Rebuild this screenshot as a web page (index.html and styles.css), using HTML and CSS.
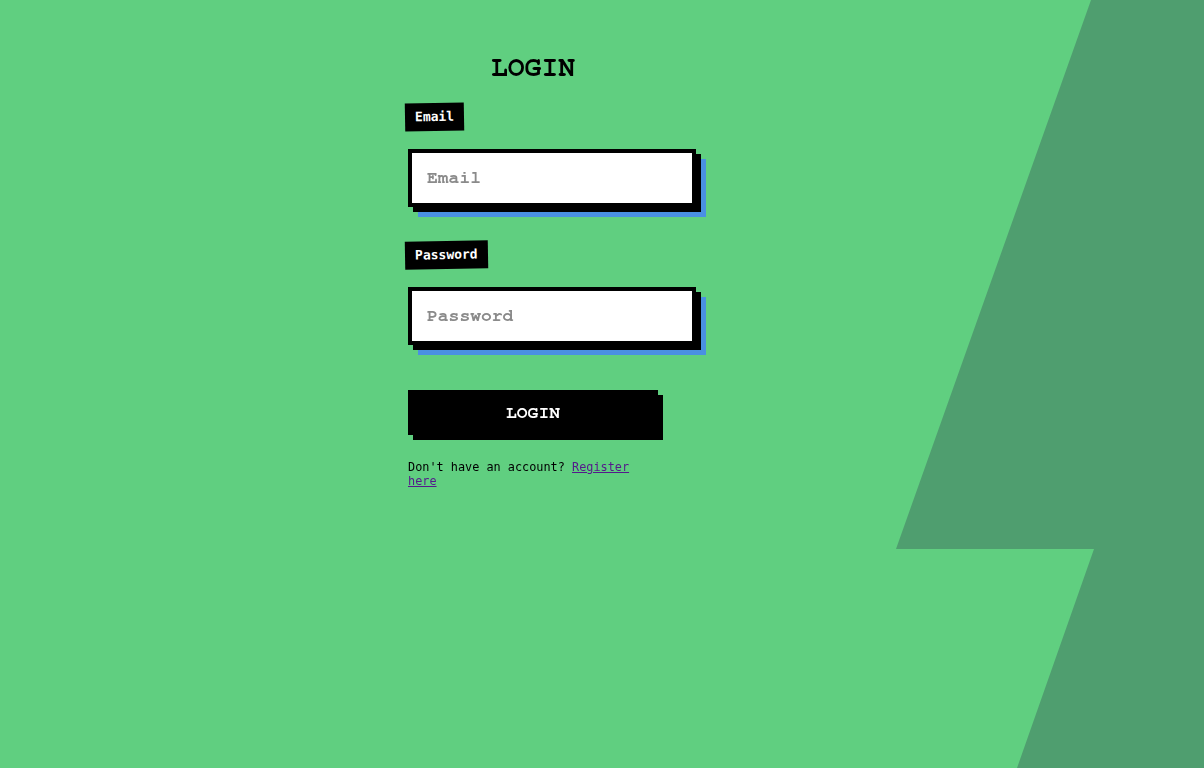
FILE: index.html
```html
<!DOCTYPE html>
<html lang="en">
<head>
<meta charset="utf-8">
<title>Login</title>
<link rel="stylesheet" href="styles.css">
</head>
<body>
<div class="bolt" aria-hidden="true"></div>
<main class="page">
  <form class="login">
    <h1 class="title">LOGIN</h1>
    <div class="field">
      <label class="tag" for="email">Email</label>
      <input class="box" id="email" type="email" placeholder="Email">
    </div>
    <div class="field">
      <label class="tag" for="password">Password</label>
      <input class="box" id="password" type="password" placeholder="Password">
    </div>
    <button class="submit" type="button">LOGIN</button>
    <p class="note">Don't have an account? <a class="link" href="#">Register here</a></p>
  </form>
</main>
</body>
</html>
```

FILE: styles.css
```css
html, body {
  margin: 0;
  padding: 0;
  height: 100%;
}

body {
  background: #60cf80;
  overflow: hidden;
}

.bolt {
  position: fixed;
  inset: 0;
  z-index: 0;
  background: #4f9e6f;
  clip-path: polygon(1091px 0, 100% 0, 100% 100%, 1017px 100%, 1094px 549px, 896px 549px);
}

.page {
  position: relative;
  z-index: 1;
  display: flex;
  padding: 52px 0 0 408px;
}

.login {
  width: 250px;
  display: flex;
  flex-direction: column;
  gap: 34px;
}

.title {
  margin: 0 0 -15px;
  font-family: "Nimbus Mono PS", "Nimbus Mono L", "FreeMono", "Courier 10 Pitch", "Courier", "Liberation Mono", monospace;
  font-weight: bold;
  font-size: 28px;
  line-height: 32px;
  text-align: center;
  color: #000;
}

.field {
  display: flex;
  flex-direction: column;
  align-items: flex-start;
  gap: 18px;
}

.tag {
  display: inline-block;
  background: #000;
  color: #fff;
  font-family: "DejaVu Sans Mono", monospace;
  font-weight: bold;
  font-size: 13px;
  line-height: 16px;
  padding: 6px 10px;
  transform: translateX(-3px) rotate(-1deg);
}

.box {
  box-sizing: content-box;
  width: 250px;
  height: 20px;
  margin: 0;
  padding: 15px;
  border: 4px solid #000;
  border-radius: 0;
  background: #fff;
  font-family: "Nimbus Mono PS", "Nimbus Mono L", "FreeMono", "Courier 10 Pitch", "Courier", "Liberation Mono", monospace;
  font-weight: bold;
  font-size: 18px;
  line-height: 20px;
  color: #000;
  outline: none;
  box-shadow: 5px 5px 0 #000, 10px 10px 0 #4a90e2;
}

.box::placeholder {
  color: #8a8a8a;
  opacity: 1;
}

.submit {
  margin-top: 11px;
  width: 250px;
  height: 45px;
  border: 0;
  border-radius: 0;
  padding: 0;
  background: #000;
  color: #fff;
  font-family: "Nimbus Mono PS", "Nimbus Mono L", "FreeMono", "Courier 10 Pitch", "Courier", "Liberation Mono", monospace;
  font-weight: bold;
  font-size: 18px;
  box-shadow: 5px 5px 0 #000;
  cursor: pointer;
}

.note {
  margin: -9px 0 0;
  font-family: "DejaVu Sans Mono", monospace;
  font-size: 11.85px;
  line-height: 14px;
  color: #000;
}

.link {
  color: #551a8b;
  text-decoration: underline;
}
```
